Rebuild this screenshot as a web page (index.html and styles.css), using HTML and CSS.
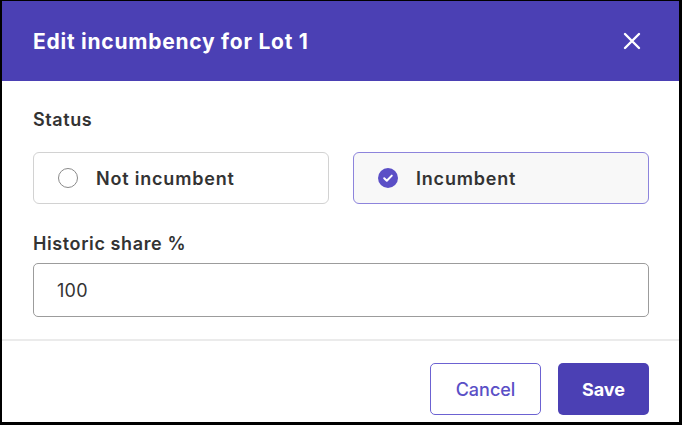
FILE: index.html
```html
<!DOCTYPE html>
<html lang="en">
<head>
    <meta charset="UTF-8">
    <meta name="viewport" content="width=device-width, initial-scale=1.0">
    <title>Edit incumbency</title>
    <link rel="stylesheet" href="styles.css">
</head>
<body>
    <div class="dialog">
        <div class="dialog-header">
            <h1 class="dialog-title">Edit incumbency for Lot 1</h1>
            <button class="close-btn" aria-label="Close">
                <svg width="18" height="18" viewBox="0 0 18 18">
                    <path d="M2 2 L16 16 M16 2 L2 16" stroke="#fff" stroke-width="2.4" stroke-linecap="round"/>
                </svg>
            </button>
        </div>

        <div class="dialog-body">
            <div class="field-label">Status</div>
            <div class="options">
                <label class="option">
                    <span class="radio"></span>
                    <span class="option-text">Not incumbent</span>
                </label>
                <label class="option selected">
                    <span class="radio checked">
                        <svg width="20" height="20" viewBox="0 0 20 20">
                            <circle cx="10" cy="10" r="10" fill="#5b4fc6"/>
                            <path d="M6.2 10.3 L8.8 12.8 L13.8 7.6" fill="none" stroke="#fff" stroke-width="2" stroke-linecap="round" stroke-linejoin="round"/>
                        </svg>
                    </span>
                    <span class="option-text">Incumbent</span>
                </label>
            </div>

            <div class="field-label share-label">Historic share %</div>
            <div class="text-input">100</div>
        </div>

        <div class="dialog-footer">
            <button class="btn btn-outline">Cancel</button>
            <button class="btn btn-primary">Save</button>
        </div>
    </div>
</body>
</html>
```

FILE: styles.css
```css
html, body {
    margin: 0;
    padding: 0;
    background: #fff;
}

.dialog {
    box-sizing: border-box;
    width: 682px;
    height: 425px;
    border-style: solid;
    border-color: #000;
    border-width: 1px 3px 3px 2px;
    font-family: Inter, "Noto Sans", sans-serif;
    color: #333;
    display: flex;
    flex-direction: column;
}

.dialog-header {
    height: 80px;
    background: #4b40b4;
    display: flex;
    align-items: center;
    justify-content: space-between;
    padding: 0 38px 0 31px;
    flex-shrink: 0;
}

.dialog-title {
    margin: 0;
    font-size: 21px;
    font-weight: 700;
    color: #fff;
    letter-spacing: 0.75px;
}

.close-btn {
    background: none;
    border: 0;
    padding: 0;
    width: 18px;
    height: 18px;
    display: flex;
}

.dialog-body {
    padding: 27px 30px 22px 31px;
    border-bottom: 2px solid #ebebeb;
}

.field-label {
    font-size: 18px;
    font-weight: 600;
    line-height: 24px;
    letter-spacing: 0.6px;
    color: #333;
}

.options {
    display: grid;
    grid-template-columns: 1fr 1fr;
    gap: 24px;
    margin-top: 20px;
}

.option {
    box-sizing: border-box;
    height: 52px;
    border: 1px solid #d2d2d2;
    border-radius: 6px;
    display: flex;
    align-items: center;
    padding-left: 24px;
    gap: 18px;
}

.option.selected {
    border-color: #8d84dc;
    background: #f8f8f8;
}

.radio {
    box-sizing: border-box;
    width: 20px;
    height: 20px;
    border: 1.5px solid #8a8a8a;
    border-radius: 50%;
    display: flex;
}

.radio.checked {
    border: 0;
}

.option-text {
    font-size: 18px;
    font-weight: 600;
    letter-spacing: 0.8px;
    color: #333;
}

.share-label {
    margin-top: 28px;
}

.text-input {
    box-sizing: border-box;
    margin-top: 7px;
    height: 54px;
    border: 1px solid #9c9c9c;
    border-radius: 5px;
    display: flex;
    align-items: center;
    padding-left: 23px;
    font-size: 18px;
    letter-spacing: 0.3px;
    color: #333;
}

.dialog-footer {
    display: flex;
    justify-content: flex-end;
    gap: 17px;
    padding: 22px 30px 0 31px;
}

.btn {
    box-sizing: border-box;
    height: 52px;
    border-radius: 5px;
    font-family: Inter, "Noto Sans", sans-serif;
    font-size: 18px;
}

.btn-outline {
    width: 111px;
    background: #fff;
    border: 1.5px solid #6c62d2;
    color: #5a4fc6;
    font-weight: 500;
}

.btn-primary {
    width: 91px;
    background: #4b40b4;
    border: 0;
    color: #fff;
    font-weight: 700;
}
```
